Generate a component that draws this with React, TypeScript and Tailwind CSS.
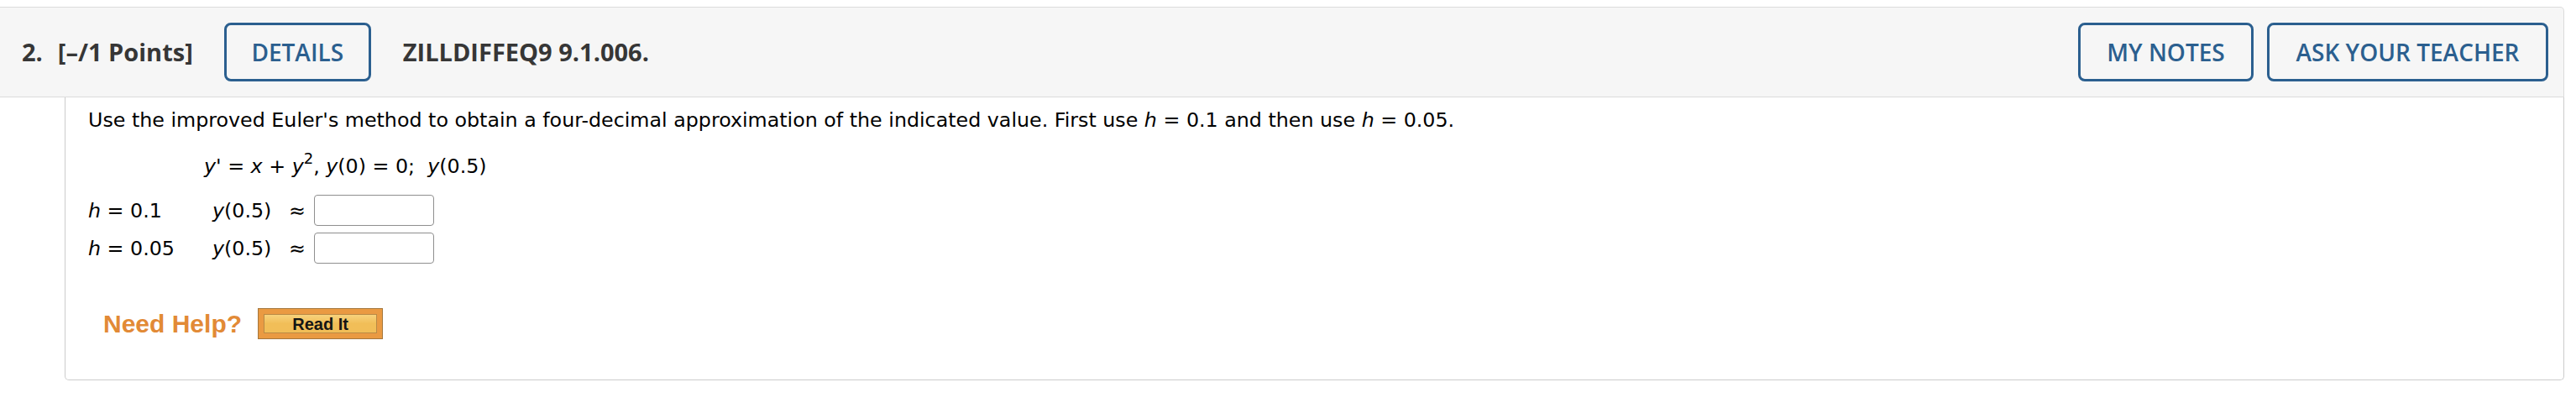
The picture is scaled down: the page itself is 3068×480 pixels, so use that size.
import React from "react";

const blueBtn =
  "flex items-center justify-center h-[70px] border-[3px] border-[#2b5f8f] rounded-[8px] text-[#2b5f8f] text-[28px] font-semibold";

function AnswerRow({ h }: { h: string }) {
  return (
    <div className="flex items-center h-[37px]">
      <div className="w-[148px]">
        <i>h</i> = {h}
      </div>
      <div className="w-[91px]">
        <i>y</i>(0.5)
      </div>
      <div className="w-[30px]">≈</div>
      <input
        type="text"
        className="w-[143px] h-[37px] border border-[#8f8f8f] rounded-[4px] bg-white outline-none"
      />
    </div>
  );
}

export default function App() {
  return (
    <div className="bg-white pt-2 pr-[14px] w-[3068px] h-[480px]">
      {/* question header */}
      <div
        className="flex items-center h-[108px] bg-[#f6f6f6] border-y border-r border-[#dcdcdc] rounded-tr-[5px] pl-[26px] pr-[18px] text-[#363636] text-[29px] font-bold"
        style={{ fontFamily: '"Open Sans", sans-serif' }}
      >
        <span>2.</span>
        <span className="ml-[18px]">[–/1 Points]</span>
        <button className={`${blueBtn} ml-[37px] w-[175px]`}>DETAILS</button>
        <span className="ml-[38px]">ZILLDIFFEQ9 9.1.006.</span>
        <div className="ml-auto flex gap-4">
          <button className={`${blueBtn} w-[209px]`}>MY NOTES</button>
          <button className={`${blueBtn} w-[335px]`}>ASK YOUR TEACHER</button>
        </div>
      </div>

      {/* question body */}
      <div
        className="ml-[77px] h-[337px] border-x border-b border-[#cccccc] rounded-b-[5px] pl-[27px] pt-[13px] text-[23.75px] leading-[28px] text-black"
        style={{ fontFamily: '"DejaVu Sans", Verdana, sans-serif' }}
      >
        <p>
          Use the improved Euler's method to obtain a four-decimal approximation of the indicated value.
          First use <i>h</i> = 0.1 and then use <i>h</i> = 0.05.
        </p>
        <p className="mt-[27px] pl-[138px]">
          <i>y</i>' = <i>x</i> + <i>y</i>
          <sup className="text-[18px] -top-[0.6em]">2</sup>, <i>y</i>(0) = 0;&nbsp; <i>y</i>(0.5)
        </p>
        <div className="mt-[20px] flex flex-col gap-2">
          <AnswerRow h="0.1" />
          <AnswerRow h="0.05" />
        </div>

        <div className="mt-[53px] ml-[18px] flex items-center gap-[19px]">
          <span
            className="text-[30px] font-bold text-[#e28a36] leading-none"
            style={{ fontFamily: '"Liberation Sans", Arial, sans-serif' }}
          >
            Need Help?
          </span>
          <button
            className="w-[149px] h-[37px] border border-[#a5773d] bg-[#ea9a42] p-[6px]"
            style={{ fontFamily: '"Liberation Sans", Arial, sans-serif' }}
          >
            <span className="flex items-center justify-center h-full border border-[#b98a45] bg-gradient-to-b from-[#f7d27c] via-[#f1be58] to-[#f1be58] text-[20px] font-bold text-[#151515]">
              Read It
            </span>
          </button>
        </div>
      </div>
    </div>
  );
}
